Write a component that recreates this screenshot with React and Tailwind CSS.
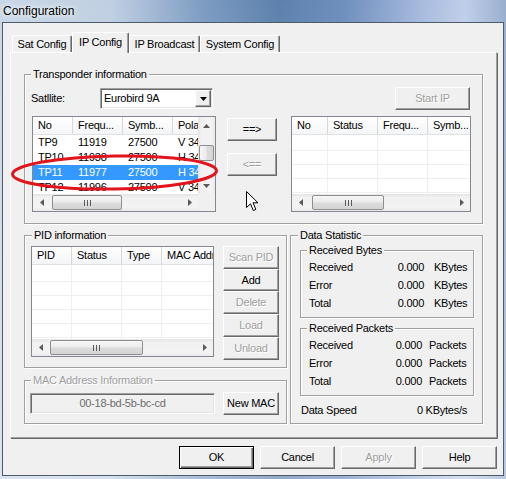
import React from "react";

const sunken =
  "border border-t-[#a0a0a0] border-l-[#a0a0a0] border-r-white border-b-white shadow-[inset_1px_1px_0_#696969,inset_-1px_-1px_0_#e3e3e3]";
const raised =
  "border border-t-white border-l-white border-r-[#696969] border-b-[#696969] shadow-[inset_-1px_-1px_0_#a0a0a0]";
const disabledText = "text-[#a0a0a0] [text-shadow:1px_1px_0_#fff]";

function Btn({ children, className = "", disabled = false, def = false }) {
  return (
    <div
      className={`shrink-0 flex items-center justify-center bg-[#f0f0f0] ${
        def
          ? "border border-black shadow-[inset_1px_1px_0_#fff,inset_-1px_-1px_0_#696969,inset_-2px_-2px_0_#a0a0a0]"
          : raised
      } ${disabled ? disabledText : "text-black"} ${className}`}
    >
      {children}
    </div>
  );
}

function Group({ label, labelClass = "", className = "", children, disabled = false }) {
  return (
    <div
      className={`flex flex-col shrink-0 border border-[#a0a0a0] shadow-[inset_1px_1px_0_#fff,1px_1px_0_#fff] ${className}`}
    >
      <div
        className={`self-start -mt-[7px] h-[13px] leading-[13px] px-[2px] bg-[#f0f0f0] whitespace-nowrap ${
          disabled ? disabledText : ""
        } ${labelClass}`}
      >
        {label}
      </div>
      {children}
    </div>
  );
}

function Tri({ dir }) {
  const horiz = dir === "left" || dir === "right";
  const d = {
    left: "M4 0L0 3.5L4 7Z",
    right: "M0 0L4 3.5L0 7Z",
    up: "M0 4L3.5 0L7 4Z",
    down: "M0 0L3.5 4L7 0Z",
  }[dir];
  return (
    <svg width={horiz ? 4 : 7} height={horiz ? 7 : 4} viewBox={horiz ? "0 0 4 7" : "0 0 7 4"}>
      <path d={d} fill="#5a5a5a" />
    </svg>
  );
}

function Grip() {
  return (
    <>
      <span className="w-px h-[6px] bg-[#5a5a5a]" />
      <span className="w-px h-[6px] bg-[#5a5a5a]" />
      <span className="w-px h-[6px] bg-[#5a5a5a]" />
    </>
  );
}

function HScroll({ className = "", spacer = "w-[2px]", thumb = "w-[70px]" }) {
  return (
    <div
      className={`flex h-[17px] shrink-0 items-center bg-[linear-gradient(#e4e4e4,#f1f1f1_20%,#f3f3f3_80%,#e9e9e9)] ${className}`}
    >
      <div className="w-[17px] h-[17px] shrink-0 flex items-center justify-center">
        <Tri dir="left" />
      </div>
      <div className={`${spacer} shrink-0`} />
      <div
        className={`h-[15px] shrink-0 rounded-[2px] border border-[#8f8f8f] bg-[linear-gradient(#f6f6f6,#ececec_45%,#dcdcdc_55%,#d4d4d4)] flex items-center justify-center gap-[2px] ${thumb}`}
      >
        <Grip />
      </div>
      <div className="flex-1" />
      <div className="w-[17px] h-[17px] shrink-0 flex items-center justify-center">
        <Tri dir="right" />
      </div>
    </div>
  );
}

function VScroll() {
  return (
    <div className="w-[17px] shrink-0 flex flex-col bg-[linear-gradient(90deg,#e4e4e4,#f1f1f1_20%,#f3f3f3_80%,#e9e9e9)]">
      <div className="h-[17px] shrink-0 flex items-center justify-center">
        <Tri dir="up" />
      </div>
      <div className="h-[11px] shrink-0" />
      <div className="h-[16px] w-[15px] ml-[1px] shrink-0 rounded-[2px] border border-[#8f8f8f] bg-[linear-gradient(90deg,#f6f6f6,#ececec_45%,#dcdcdc_55%,#d4d4d4)]" />
      <div className="flex-1" />
      <div className="h-[17px] shrink-0 flex items-center justify-center">
        <Tri dir="down" />
      </div>
    </div>
  );
}

function Header({ cols }) {
  return (
    <div className="flex h-[18px] shrink-0 bg-[linear-gradient(#ffffff,#f4f5f7)] border-b border-[#e0e1e3]">
      {cols.map(([t, w], i) => (
        <div
          key={i}
          className={`${w} shrink-0 h-full pl-[5px] leading-[17px] overflow-hidden whitespace-nowrap border-r border-[#d8d8d8]`}
        >
          {t}
        </div>
      ))}
    </div>
  );
}

function GridRows({ cols, count, firstH }) {
  return Array.from({ length: count }).map((_, r) => (
    <div
      key={r}
      className={`flex shrink-0 border-b border-[#efefef] ${r === 0 ? firstH : "h-[14px]"}`}
    >
      {cols.map(([, w], i) => (
        <div key={i} className={`${w} shrink-0 h-full border-r border-[#efefef]`} />
      ))}
    </div>
  ));
}

const tpCols = [
  ["No", "w-[40px]"],
  ["Frequ...", "w-[50px]"],
  ["Symb...", "w-[50px]"],
  ["Polarization", "w-[40px]"],
];
const tpRows = [
  ["TP9", "11919", "27500", "V 34"],
  ["TP10", "11938", "27500", "H 34"],
  ["TP11", "11977", "27500", "H 34"],
  ["TP12", "11996", "27500", "V 34"],
];
const rCols = [
  ["No", "w-[36px]"],
  ["Status", "w-[50px]"],
  ["Frequ...", "w-[50px]"],
  ["Symb...", "w-[50px]"],
];
const pidCols = [
  ["PID", "w-[40px]"],
  ["Status", "w-[50px]"],
  ["Type", "w-[40px]"],
  ["MAC Address", "w-[60px]"],
];

function StatRow({ label, value, unit, unitClass }) {
  return (
    <div className="flex h-[18px] shrink-0 items-center pl-[8px]">
      <div className="flex-1 whitespace-nowrap">{label}</div>
      <div className="whitespace-nowrap">{value}</div>
      <div className={`whitespace-nowrap shrink-0 ${unitClass}`}>{unit}</div>
    </div>
  );
}

export default function App() {
  return (
    <div
      className="relative w-[506px] h-[479px] overflow-hidden font-['Liberation_Sans',Arial,sans-serif] text-[11px] tracking-[-0.25px] text-black bg-[linear-gradient(180deg,rgba(255,255,255,0.1),rgba(255,255,255,0.4)),linear-gradient(90deg,#c3d2e3_0%,#b9cadf_22%,#6f91bc_40%,#4a73a3_55%,#5e82b5_68%,#a0b5dc_84%,#b9c9e6_92%,#8ca5c9_100%)]"
    >
      {/* Title bar */}
      <div className="h-[22px] flex items-center pl-[3px] text-[12px] tracking-normal [text-shadow:0_0_8px_#fff,0_0_4px_#fff]">
        Configuration
      </div>

      {/* Client area */}
      <div className="ml-[2px] w-[502px] h-[454px] border border-[#4d5b6b] bg-[#f0f0f0] flex flex-col">
        {/* Tabs */}
        <div className="mt-[9px] ml-[9px] h-[20px] flex items-end shrink-0">
          <div className="w-[60px] h-[17px] shrink-0 flex items-center justify-center rounded-t-[2px] border-t border-l border-r border-t-white border-l-white border-r-[#696969] shadow-[inset_-1px_0_0_#a0a0a0]">
            Sat Config
          </div>
          <div className="relative z-10 -mb-[1px] w-[57px] h-[21px] shrink-0 flex justify-center pt-[3px] leading-[13px] bg-[#f0f0f0] rounded-t-[2px] border-t border-l border-r border-t-white border-l-white border-r-[#696969] shadow-[inset_-1px_0_0_#a0a0a0]">
            IP Config
          </div>
          <div className="w-[71px] h-[17px] shrink-0 flex items-center justify-center rounded-t-[2px] border-t border-l border-r border-t-white border-l-white border-r-[#696969] shadow-[inset_-1px_0_0_#a0a0a0]">
            IP Broadcast
          </div>
          <div className="w-[80px] h-[17px] shrink-0 flex items-center justify-center rounded-t-[2px] border-t border-l border-r border-t-white border-l-white border-r-[#696969] shadow-[inset_-1px_0_0_#a0a0a0]">
            System Config
          </div>
        </div>

        {/* Tab page */}
        <div className="ml-[7px] w-[487px] h-[386px] shrink-0 flex flex-col pl-[13px] pt-[21px] border border-t-white border-l-white border-r-[#a0a0a0] border-b-[#a0a0a0] shadow-[1px_1px_0_#696969]">
          {/* Transponder information */}
          <Group label="Transponder information" labelClass="ml-[6px]" className="w-[459px] h-[150px]">
            <div className="mt-[6px] h-[23px] flex items-center shrink-0 pl-[6px] pr-[12px]">
              <div className="w-[69px] shrink-0">Satllite:</div>
              <div className={`w-[113px] h-[21px] shrink-0 bg-white flex items-center ${sunken}`}>
                <div className="flex-1 pl-[3px] whitespace-nowrap">Eurobird 9A</div>
                <div
                  className={`w-[16px] h-[17px] mr-[1px] shrink-0 flex items-center justify-center bg-[#f0f0f0] ${raised}`}
                >
                  <svg width="7" height="4" viewBox="0 0 7 4">
                    <path d="M0 0L3.5 4L7 0Z" fill="#000" />
                  </svg>
                </div>
              </div>
              <div className="flex-1" />
              <Btn disabled className="w-[75px] h-[23px]">
                Start IP
              </Btn>
            </div>

            <div className="mt-[6px] flex items-start shrink-0 pl-[7px]">
              {/* Left list */}
              <div className="w-[184px] h-[96px] shrink-0 border border-[#828790] bg-white flex flex-col">
                <div className="flex h-[77px] shrink-0">
                  <div className="w-[165px] shrink-0 overflow-hidden flex flex-col">
                    <Header cols={tpCols} />
                    {tpRows.map((r, ri) => (
                      <div
                        key={ri}
                        className={`flex h-[15px] shrink-0 leading-[15px] ${
                          ri === 2 ? "bg-[#3399ff] text-white" : ""
                        }`}
                      >
                        {r.map((c, ci) => (
                          <div
                            key={ci}
                            className={`${tpCols[ci][1]} shrink-0 pl-[5px] overflow-hidden whitespace-nowrap`}
                          >
                            {c}
                          </div>
                        ))}
                      </div>
                    ))}
                  </div>
                  <VScroll />
                </div>
                <div className="flex h-[17px] shrink-0">
                  <HScroll className="w-[165px]" spacer="w-[2px]" thumb="w-[70px]" />
                  <div className="w-[17px] h-[17px] shrink-0 bg-[#f0f0f0]" />
                </div>
              </div>

              {/* Move buttons */}
              <div className="ml-[11px] w-[50px] shrink-0 flex flex-col gap-[12px] pt-[2px]">
                <Btn className="w-[50px] h-[23px]">==&gt;</Btn>
                <Btn disabled className="w-[50px] h-[23px]">
                  &lt;==
                </Btn>
              </div>

              {/* Right list */}
              <div className="ml-[14px] w-[180px] h-[96px] shrink-0 border border-[#828790] bg-white flex flex-col">
                <div className="h-[77px] shrink-0 overflow-hidden flex flex-col">
                  <Header cols={rCols} />
                  <GridRows cols={rCols} count={5} firstH="h-[16px]" />
                </div>
                <HScroll className="w-[178px]" spacer="w-[3px]" thumb="w-[72px]" />
              </div>
            </div>
          </Group>

          {/* Bottom section */}
          <div className="mt-[11px] flex items-start shrink-0">
            <div className="w-[263px] shrink-0 flex flex-col">
              <Group label="PID information" labelClass="ml-[7px]" className="w-[263px] h-[133px]">
                <div className="mt-[4px] flex items-start pl-[6px] shrink-0">
                  <div className="w-[183px] h-[111px] shrink-0 border border-[#828790] bg-white flex flex-col">
                    <div className="h-[92px] shrink-0 overflow-hidden flex flex-col">
                      <Header cols={pidCols} />
                      <GridRows cols={pidCols} count={6} firstH="h-[17px]" />
                    </div>
                    <HScroll className="w-[181px]" spacer="w-[1px]" thumb="w-[93px]" />
                  </div>
                  <div className="ml-[9px] w-[56px] shrink-0 flex flex-col">
                    <Btn disabled className="w-[56px] h-[23px]">
                      Scan PID
                    </Btn>
                    <Btn className="w-[56px] h-[22px]">Add</Btn>
                    <Btn disabled className="w-[56px] h-[23px]">
                      Delete
                    </Btn>
                    <Btn disabled className="w-[56px] h-[23px]">
                      Load
                    </Btn>
                    <Btn disabled className="w-[56px] h-[23px]">
                      Unload
                    </Btn>
                  </div>
                </div>
              </Group>

              <Group
                label="MAC Address Information"
                disabled
                labelClass="ml-[6px]"
                className="mt-[12px] w-[263px] h-[44px]"
              >
                <div className="mt-[5px] h-[23px] flex items-center pl-[5px] shrink-0">
                  <div
                    className={`w-[185px] h-[21px] shrink-0 bg-[#f0f0f0] flex items-center justify-center text-[#6d6d6d] ${sunken}`}
                  >
                    00-18-bd-5b-bc-cd
                  </div>
                  <Btn className="ml-[8px] w-[56px] h-[23px]">New MAC</Btn>
                </div>
              </Group>
            </div>

            <Group label="Data Statistic" labelClass="ml-[7px]" className="ml-[3px] w-[193px] h-[189px]">
              <Group
                label="Received Bytes"
                labelClass="ml-[6px]"
                className="mt-[8px] ml-[9px] w-[174px] h-[68px]"
              >
                <div className="mt-[1px] flex flex-col shrink-0">
                  <StatRow label="Received" value="0.000" unit="KBytes" unitClass="ml-[10px] w-[39px]" />
                  <StatRow label="Error" value="0.000" unit="KBytes" unitClass="ml-[10px] w-[39px]" />
                  <StatRow label="Total" value="0.000" unit="KBytes" unitClass="ml-[10px] w-[39px]" />
                </div>
              </Group>
              <Group
                label="Received Packets"
                labelClass="ml-[6px]"
                className="mt-[10px] ml-[9px] w-[174px] h-[68px]"
              >
                <div className="mt-[1px] flex flex-col shrink-0">
                  <StatRow label="Received" value="0.000" unit="Packets" unitClass="ml-[7px] w-[44px]" />
                  <StatRow label="Error" value="0.000" unit="Packets" unitClass="ml-[7px] w-[44px]" />
                  <StatRow label="Total" value="0.000" unit="Packets" unitClass="ml-[7px] w-[44px]" />
                </div>
              </Group>
              <div className="mt-[5px] h-[18px] flex items-center justify-between pl-[10px] pr-[15px] shrink-0">
                <div>Data Speed</div>
                <div>0 KBytes/s</div>
              </div>
            </Group>
          </div>
        </div>

        {/* Dialog buttons */}
        <div className="mt-[8px] ml-[176px] flex gap-[6px] shrink-0">
          <Btn def className="w-[75px] h-[23px]">
            OK
          </Btn>
          <Btn className="w-[75px] h-[23px]">Cancel</Btn>
          <Btn disabled className="w-[75px] h-[23px]">
            Apply
          </Btn>
          <Btn className="w-[75px] h-[23px]">Help</Btn>
        </div>
      </div>

      {/* Red annotation ellipse */}
      <svg
        className="absolute left-0 top-0 pointer-events-none"
        width="506"
        height="479"
        viewBox="0 0 506 479"
      >
        <ellipse
          cx="114.5"
          cy="172.5"
          rx="102"
          ry="16.5"
          fill="none"
          stroke="#e3151c"
          strokeWidth="3"
          transform="rotate(-1 114.5 172.5)"
        />
      </svg>

      {/* Mouse cursor */}
      <svg
        className="absolute left-[246px] top-[191px] pointer-events-none"
        width="13"
        height="21"
        viewBox="0 0 13 21"
      >
        <path
          d="M0.5 0.5L0.5 16.5L4.5 12.8L7.3 19.5L9.8 18.4L7.1 11.8L12 11.8Z"
          fill="#fff"
          stroke="#000"
          strokeWidth="1"
          strokeLinejoin="miter"
        />
      </svg>
    </div>
  );
}
